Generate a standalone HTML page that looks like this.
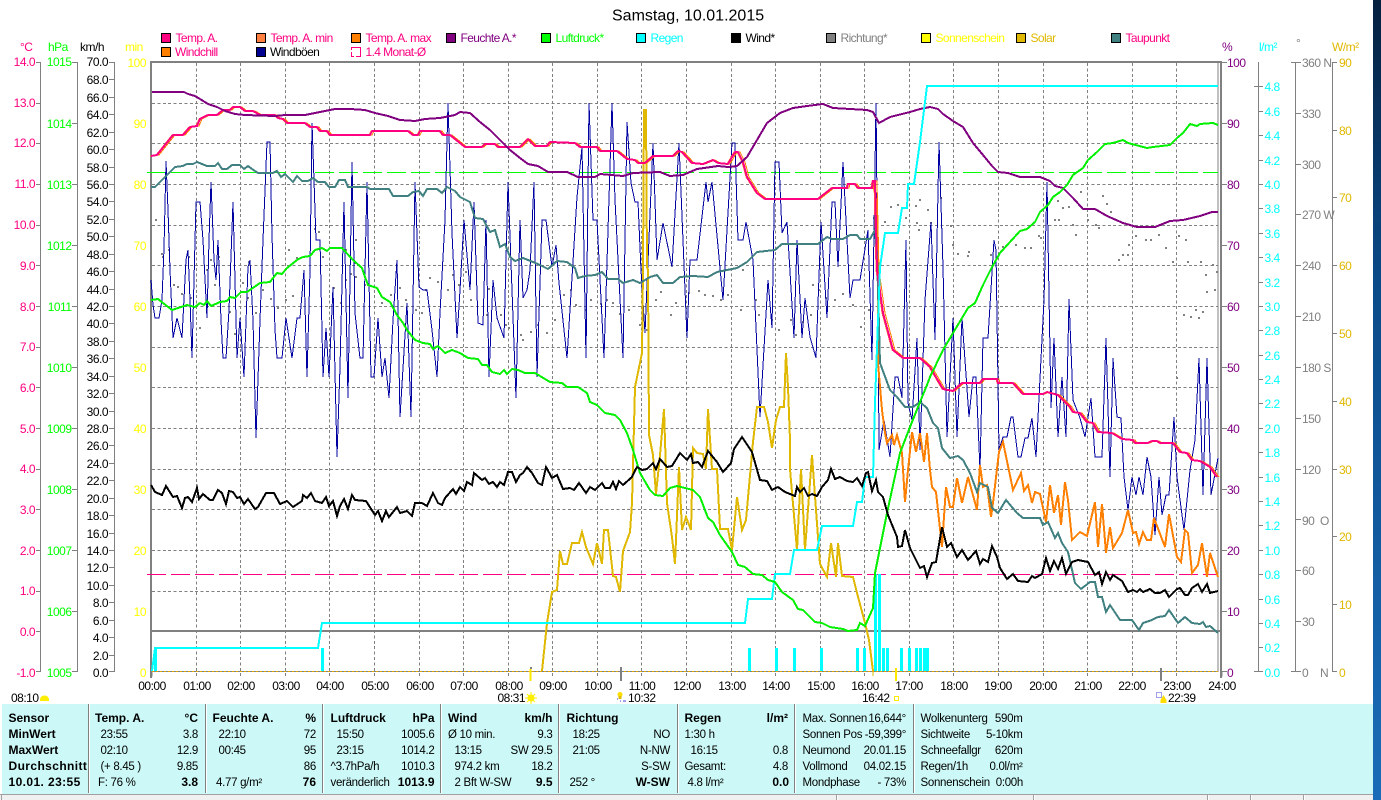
<!DOCTYPE html>
<html><head><meta charset="utf-8"><title>Samstag, 10.01.2015</title>
<style>
html,body{margin:0;padding:0;background:#fff;overflow:hidden}
svg{display:block;font-family:"Liberation Sans",sans-serif}
text{font-size:12px;letter-spacing:-.5px}
.e{text-anchor:end}
.p{fill:#ff0080}.g{fill:#00ff00}.k{fill:#000}.y{fill:#ffff00}.v{fill:#800080}.c{fill:#00ffff}.a{fill:#808080}.o{fill:#e0b800}
.n{letter-spacing:-.6px}
.t text{font-size:11.5px;letter-spacing:-.3px}
.t .b{font-size:12px;font-weight:bold;letter-spacing:0}
.s{fill:none;shape-rendering:crispEdges;stroke-linejoin:miter}
</style></head><body>
<svg width="1381" height="800" viewBox="0 0 1381 800" xmlns="http://www.w3.org/2000/svg">
<defs>
<linearGradient id="bg" x1="0" y1="0" x2="0" y2="1"><stop offset="0" stop-color="#06203f"/><stop offset=".35" stop-color="#0a4a88"/><stop offset="1" stop-color="#1a6cb8"/></linearGradient>
<polyline id="tmp" points="151,156 157,155 173,135 183,135 190,127 197,126 200,119 208,115 217,115 223,110 230,110 233,107 240,107 245,111 253,111 260,115 275,115 278,118 283,119 287,123 305,123 310,127 317,127 320,131 327,131 330,135 370,135 372,131 408,131 413,135 418,135 420,131 440,131 443,135 450,135 460,143 465,147 482,147 485,144 495,144 498,147 520,147 528,139 535,146 547,146 550,142 575,143 580,147 597,147 600,151 617,151 627,159 635,160 638,163 645,163 653,156 673,156 678,151 682,152 692,163 703,164 713,160 718,163 728,164 735,152 738,152 743,162 747,177 757,193 765,199 818,199 832,188 847,188 848,184 855,184 858,188 872,188 873,181 875,181 877,270 883,313 893,350 903,358 920,358 930,367 943,389 953,391 962,383 980,383 983,379 997,379 998,383 1013,383 1023,394 1043,394 1047,392 1058,395 1070,407 1073,412 1080,413 1087,422 1093,423 1098,432 1112,433 1122,439 1133,440 1135,443 1148,443 1152,441 1157,441 1160,443 1173,443 1180,452 1187,453 1192,460 1200,461 1210,467 1217,477"/>
</defs>
<rect width="1381" height="800" fill="#fff"/>
<rect x="1373" y="0" width="8" height="800" fill="url(#bg)"/>

<!-- title -->
<text x="612" y="20.5" style="font-size:16px;letter-spacing:0" class="k">Samstag, 10.01.2015</text>

<!-- legend -->
<g stroke="#000" stroke-width="1" shape-rendering="crispEdges">
<rect x="161.5" y="33.5" width="9" height="9" fill="#ff0080"/><rect x="256.5" y="33.5" width="9" height="9" fill="#ff8040"/><rect x="351.5" y="33.5" width="9" height="9" fill="#ff8000"/><rect x="446.5" y="33.5" width="9" height="9" fill="#800080"/><rect x="541.5" y="33.5" width="9" height="9" fill="#00ff00"/><rect x="636.5" y="33.5" width="9" height="9" fill="#00ffff"/><rect x="731.5" y="33.5" width="9" height="9" fill="#000"/><rect x="826.5" y="33.5" width="9" height="9" fill="#808080"/><rect x="921.5" y="33.5" width="9" height="9" fill="#ffff00"/><rect x="1016.5" y="33.5" width="9" height="9" fill="#e0b800"/><rect x="1111.5" y="33.5" width="9" height="9" fill="#408080"/>
<rect x="161.5" y="47.5" width="9" height="9" fill="#ff8000"/><rect x="256.5" y="47.5" width="9" height="9" fill="#000090"/>
</g>
<path d="M351.5 50V47.5H360.5V56.5H356" fill="none" stroke="#ff0080" shape-rendering="crispEdges"/>
<path d="M351.5 52V56.5H354" fill="none" stroke="#ff0080" shape-rendering="crispEdges"/>
<g>
<text x="175.5" y="42" class="p n">Temp. A.</text><text x="270.5" y="42" class="p n">Temp. A. min</text><text x="365.5" y="42" class="p n">Temp. A. max</text><text x="460.5" y="42" class="v n">Feuchte A.*</text><text x="555.5" y="42" class="g n">Luftdruck*</text><text x="650.5" y="42" class="c n">Regen</text><text x="745.5" y="42" class="k n">Wind*</text><text x="840.5" y="42" class="a n">Richtung*</text><text x="935.5" y="42" class="y n">Sonnenschein</text><text x="1030.5" y="42" class="o n">Solar</text><text x="1125.5" y="42" class="p n">Taupunkt</text>
<text x="175" y="56" class="p n">Windchill</text><text x="270" y="56" class="k n">Windböen</text><text x="365.5" y="56" class="p n">1.4 Monat-Ø</text>
</g>

<!-- axis headers -->
<text x="20" y="51" class="p">°C</text><text x="48" y="51" class="g">hPa</text><text x="80" y="51" class="k">km/h</text><text x="125" y="51" class="y">min</text>
<text x="1222" y="51" class="v">%</text><text x="1259" y="51" class="c">l/m²</text><text x="1296" y="47" class="a">°</text><text x="1332" y="51" class="o">W/m²</text>

<!-- axis lines + ticks -->
<g fill="none" stroke="#808080" shape-rendering="crispEdges">
<path d="M40.5 62V672M36 62.5H41M36 103.5H41M36 143.5H41M36 184.5H41M36 225.5H41M36 265.5H41M36 306.5H41M36 347.5H41M36 387.5H41M36 428.5H41M36 469.5H41M36 509.5H41M36 550.5H41M36 591.5H41M36 631.5H41M36 671.5H41"/>
<path d="M77.5 62V672M72 62.5H78M72 123.5H78M72 184.5H78M72 245.5H78M72 306.5H78M72 367.5H78M72 428.5H78M72 489.5H78M72 550.5H78M72 611.5H78M72 671.5H78"/>
<path d="M114.5 62V672M109 62.5H115M109 79.5H115M109 97.5H115M109 114.5H115M109 132.5H115M109 149.5H115M109 167.5H115M109 184.5H115M109 201.5H115M109 219.5H115M109 236.5H115M109 254.5H115M109 271.5H115M109 289.5H115M109 306.5H115M109 323.5H115M109 341.5H115M109 358.5H115M109 376.5H115M109 393.5H115M109 411.5H115M109 428.5H115M109 445.5H115M109 463.5H115M109 480.5H115M109 498.5H115M109 515.5H115M109 533.5H115M109 550.5H115M109 567.5H115M109 585.5H115M109 602.5H115M109 620.5H115M109 637.5H115M109 655.5H115M109 671.5H115"/>
<path d="M1222 62.5H1227M1222 123.5H1227M1222 184.5H1227M1222 245.5H1227M1222 306.5H1227M1222 367.5H1227M1222 428.5H1227M1222 489.5H1227M1222 550.5H1227M1222 611.5H1227M1222 671.5H1227"/>
<path d="M1258.5 62V672M1254 86.5H1263M1258 111.5H1263M1258 135.5H1263M1258 160.5H1263M1258 184.5H1263M1258 208.5H1263M1258 233.5H1263M1258 257.5H1263M1258 282.5H1263M1258 306.5H1263M1258 330.5H1263M1258 355.5H1263M1258 379.5H1263M1258 403.5H1263M1258 428.5H1263M1258 452.5H1263M1258 477.5H1263M1258 501.5H1263M1258 525.5H1263M1258 550.5H1263M1258 574.5H1263M1258 599.5H1263M1258 623.5H1263M1258 647.5H1263M1254 671.5H1263"/>
<path d="M1295.5 62V672M1291 62.5H1301M1296 113.5H1301M1296 164.5H1301M1296 214.5H1301M1296 265.5H1301M1296 316.5H1301M1296 367.5H1301M1296 418.5H1301M1296 469.5H1301M1296 519.5H1301M1296 570.5H1301M1296 621.5H1301M1291 671.5H1301"/>
<path d="M1332.5 62V672M1332 62.5H1337M1332 130.5H1337M1332 197.5H1337M1332 265.5H1337M1332 333.5H1337M1332 401.5H1337M1332 469.5H1337M1332 536.5H1337M1332 604.5H1337M1332 671.5H1337"/>
</g>

<!-- °C labels -->
<g class="p">
<text class="e" x="35" y="66">14.0</text><text class="e" x="35" y="107">13.0</text><text class="e" x="35" y="147">12.0</text><text class="e" x="35" y="188">11.0</text><text class="e" x="35" y="229">10.0</text><text class="e" x="35" y="270">9.0</text><text class="e" x="35" y="311">8.0</text><text class="e" x="35" y="351">7.0</text><text class="e" x="35" y="392">6.0</text><text class="e" x="35" y="433">5.0</text><text class="e" x="35" y="473">4.0</text><text class="e" x="35" y="514">3.0</text><text class="e" x="35" y="555">2.0</text><text class="e" x="35" y="595">1.0</text><text class="e" x="35" y="636">0.0</text><text class="e" x="35" y="677">-1.0</text>
</g>
<g class="g">
<text class="e" x="71.5" y="66">1015</text><text class="e" x="71.5" y="128">1014</text><text class="e" x="71.5" y="189">1013</text><text class="e" x="71.5" y="250">1012</text><text class="e" x="71.5" y="311">1011</text><text class="e" x="71.5" y="372">1010</text><text class="e" x="71.5" y="433">1009</text><text class="e" x="71.5" y="494">1008</text><text class="e" x="71.5" y="555">1007</text><text class="e" x="71.5" y="616">1006</text><text class="e" x="71.5" y="677">1005</text>
</g>
<g class="k">
<text class="e" x="108" y="66">70.0</text><text class="e" x="108" y="84">68.0</text><text class="e" x="108" y="102">66.0</text><text class="e" x="108" y="119">64.0</text><text class="e" x="108" y="137">62.0</text><text class="e" x="108" y="154">60.0</text><text class="e" x="108" y="172">58.0</text><text class="e" x="108" y="189">56.0</text><text class="e" x="108" y="206">54.0</text><text class="e" x="108" y="224">52.0</text><text class="e" x="108" y="241">50.0</text><text class="e" x="108" y="259">48.0</text><text class="e" x="108" y="276">46.0</text><text class="e" x="108" y="294">44.0</text><text class="e" x="108" y="311">42.0</text><text class="e" x="108" y="328">40.0</text><text class="e" x="108" y="346">38.0</text><text class="e" x="108" y="363">36.0</text><text class="e" x="108" y="381">34.0</text><text class="e" x="108" y="398">32.0</text><text class="e" x="108" y="416">30.0</text><text class="e" x="108" y="433">28.0</text><text class="e" x="108" y="450">26.0</text><text class="e" x="108" y="468">24.0</text><text class="e" x="108" y="485">22.0</text><text class="e" x="108" y="503">20.0</text><text class="e" x="108" y="520">18.0</text><text class="e" x="108" y="538">16.0</text><text class="e" x="108" y="555">14.0</text><text class="e" x="108" y="572">12.0</text><text class="e" x="108" y="590">10.0</text><text class="e" x="108" y="607">8.0</text><text class="e" x="108" y="625">6.0</text><text class="e" x="108" y="642">4.0</text><text class="e" x="108" y="660">2.0</text><text class="e" x="108" y="677">0.0</text>
</g>
<g class="y">
<text class="e" x="146" y="67">100</text><text class="e" x="146" y="128">90</text><text class="e" x="146" y="189">80</text><text class="e" x="146" y="250">70</text><text class="e" x="146" y="311">60</text><text class="e" x="146" y="372">50</text><text class="e" x="146" y="433">40</text><text class="e" x="146" y="494">30</text><text class="e" x="146" y="555">20</text><text class="e" x="146" y="616">10</text><text class="e" x="146" y="677">0</text>
</g>
<g class="v">
<text x="1227" y="67">100</text><text x="1227" y="128">90</text><text x="1227" y="189">80</text><text x="1227" y="250">70</text><text x="1227" y="311">60</text><text x="1227" y="372">50</text><text x="1227" y="433">40</text><text x="1227" y="494">30</text><text x="1227" y="555">20</text><text x="1227" y="616">10</text><text x="1227" y="677">0</text>
</g>
<g class="c">
<text x="1264.5" y="91">4.8</text><text x="1264.5" y="116">4.6</text><text x="1264.5" y="140">4.4</text><text x="1264.5" y="165">4.2</text><text x="1264.5" y="189">4.0</text><text x="1264.5" y="213">3.8</text><text x="1264.5" y="238">3.6</text><text x="1264.5" y="262">3.4</text><text x="1264.5" y="287">3.2</text><text x="1264.5" y="311">3.0</text><text x="1264.5" y="335">2.8</text><text x="1264.5" y="360">2.6</text><text x="1264.5" y="384">2.4</text><text x="1264.5" y="408">2.2</text><text x="1264.5" y="433">2.0</text><text x="1264.5" y="457">1.8</text><text x="1264.5" y="482">1.6</text><text x="1264.5" y="506">1.4</text><text x="1264.5" y="530">1.2</text><text x="1264.5" y="555">1.0</text><text x="1264.5" y="579">0.8</text><text x="1264.5" y="604">0.6</text><text x="1264.5" y="628">0.4</text><text x="1264.5" y="652">0.2</text><text x="1264.5" y="677">0.0</text>
</g>
<g class="a">
<text x="1302" y="67">360 N</text><text x="1302" y="118">330</text><text x="1302" y="169">300</text><text x="1302" y="219">270 W</text><text x="1302" y="270">240</text><text x="1302" y="321">210</text><text x="1302" y="372">180 S</text><text x="1302" y="423">150</text><text x="1302" y="474">120</text><text x="1302" y="525">90</text><text x="1320" y="525">O</text><text x="1302" y="575">60</text><text x="1302" y="626">30</text><text x="1302" y="677">0</text><text x="1320" y="677">N</text>
</g>
<g class="o">
<text x="1339" y="67">90</text><text x="1339" y="135">80</text><text x="1339" y="202">70</text><text x="1339" y="270">60</text><text x="1339" y="338">50</text><text x="1339" y="406">40</text><text x="1339" y="474">30</text><text x="1339" y="541">20</text><text x="1339" y="609">10</text><text x="1339" y="677">0</text>
</g>

<!-- grid -->
<g fill="none" stroke="#808080" stroke-dasharray="3 2.4" shape-rendering="crispEdges">
<path d="M152 103.5H1218M152 143.5H1218M152 184.5H1218M152 225.5H1218M152 265.5H1218M152 306.5H1218M152 347.5H1218M152 387.5H1218M152 428.5H1218M152 469.5H1218M152 509.5H1218M152 550.5H1218M152 591.5H1218"/>
<path d="M196.5 63V676M240.5 63V676M285.5 63V676M329.5 63V676M374.5 63V676M419.5 63V676M463.5 63V676M508.5 63V676M552.5 63V676M597.5 63V676M641.5 63V676M686.5 63V676M731.5 63V676M775.5 63V676M820.5 63V676M864.5 63V676M909.5 63V676M953.5 63V676M998.5 63V676M1043.5 63V676M1087.5 63V676M1132.5 63V676M1176.5 63V676"/>
</g>
<path d="M152 672V676.5M1222 672V676.5" stroke="#808080" fill="none"/>
<!-- frame -->
<g fill="none" stroke="#808080" shape-rendering="crispEdges">
<path d="M150 62H1222" stroke-width="2"/>
<path d="M151 61V678" stroke-width="2"/>
<path d="M1221 61V678" stroke-width="2"/>
<path d="M1218 63V672"/>
<path d="M151 631H1220" stroke-width="2"/>
<path d="M152 671.5H1218"/>
</g>
<path d="M152 671.5H1218" stroke="#e0a800" stroke-dasharray="2 2" fill="none" shape-rendering="crispEdges"/>

<!-- ref dashed -->
<path d="M147 172.5H1218" stroke="#00ff00" stroke-dasharray="19 5" fill="none" shape-rendering="crispEdges"/>
<path d="M147 574.5H1218" stroke="#ff0080" stroke-dasharray="19 5" fill="none" shape-rendering="crispEdges"/>

<!-- direction dots -->
<path fill="none" stroke="#808080" stroke-width="2" shape-rendering="crispEdges" d="M155 220h2M161 254h2M168 250h2M162 257h2M188 257h2M210 260h2M218 257h2M248 262h2M288 250h2M296 258h2M314 229h2M318 232h2M322 257h2M355 240h2M345 250h2M354 263h2M173 285h2M177 287h2M181 294h2M190 298h2M199 328h2M214 285h2M206 270h2M229 312h2M234 334h2M242 283h2M247 298h2M255 313h2M262 290h2M270 299h2M277 308h2M285 300h2M292 296h2M333 288h2M340 303h2M345 280h2M350 274h2M355 277h2M364 285h2M381 303h2M390 295h2M399 288h2M405 300h2M415 310h2M421 313h2M425 290h2M429 278h2M437 282h2M447 290h2M452 275h2M458 285h2M465 272h2M470 300h2M486 315h2M488 289h2M500 315h2M505 325h2M508 328h2M520 335h2M522 340h2M530 332h2M537 325h2M546 333h2M554 320h2M563 295h2M570 290h2M575 305h2M585 310h2M590 300h2M600 304h2M606 300h2M612 303h2M619 314h2M628 310h2M639 325h2M646 330h2M655 300h2M660 292h2M670 315h2M675 303h2M688 293h2M698 291h2M704 295h2M712 296h2M720 300h2M727 295h2M740 310h2M742 270h2M755 300h2M758 315h2M771 320h2M778 330h2M790 320h2M795 335h2M802 322h2M810 315h2M812 285h2M818 290h2M825 298h2M834 300h2M842 294h2M852 305h2M860 327h2M868 310h2M873 218h2M884 222h2M890 207h2M897 205h2M905 218h2M915 206h2M916 223h2M918 230h2M919 200h2M927 210h2M940 198h2M950 226h2M930 223h2M952 245h2M957 254h2M967 256h2M968 252h2M990 255h2M1002 247h2M1015 245h2M1024 248h2M1030 248h2M1038 236h2M1040 238h2M1057 201h2M1054 220h2M1058 220h2M1068 207h2M1072 225h2M1080 192h2M1062 208h2M1075 235h2M1087 220h2M1095 225h2M1098 228h2M1102 196h2M1106 204h2M1110 212h2M1118 260h2M1122 255h2M1127 255h2M1135 236h2M1128 245h2M1145 240h2M1150 240h2M1158 235h2M1160 225h2M1165 248h2M1172 262h2M1178 236h2M1185 240h2M1187 262h2M1200 262h2M1205 275h2M1212 265h2M1216 272h2M1183 315h2M1190 317h2M1195 310h2M1198 318h2M1202 312h2M1206 292h2M1214 290h2M1176 378h2M530 668h2M620 668h2"/>

<!-- Windboeen -->
<polyline class="s" stroke="#0000a0" stroke-width="1" points="151,280 153,305 155,318 159,318 162,300 164,248 166,161 168,210 170,270 173,338 177,318 182,338 186,260 188,250 190,300 192,358 196,202 200,202 203,240 207,318 209,240 211,182 214,260 216,280 218,240 221,320 223,358 226,358 229,310 233,202 237,358 240,318 244,377 248,267 250,260 253,320 256,438 260,320 263,240 267,142 270,142 272,235 275,330 277,358 282,358 286,318 292,358 297,318 300,318 304,270 307,377 310,270 312,123 314,180 316,240 320,240 323,377 326,328 329,377 333,287 337,457 340,367 344,202 348,398 352,162 355,313 360,358 363,358 367,182 371,377 374,377 378,318 382,377 385,358 389,398 393,320 397,260 400,417 407,303 411,417 415,182 419,287 423,290 427,290 432,330 437,377 440,313 445,220 448,103 452,233 457,338 460,290 464,220 470,290 474,202 478,323 483,325 486,220 489,377 493,280 497,318 504,338 508,182 516,398 520,220 523,298 527,290 530,270 534,182 537,377 542,220 546,220 552,267 556,245 559,283 567,358 577,197 582,147 586,358 589,103 593,220 597,220 604,358 612,103 615,200 623,358 627,122 631,183 635,202 638,202 641,270 645,333 653,143 657,260 663,223 672,267 679,143 687,338 690,260 697,260 706,182 708,202 712,182 723,300 732,143 735,143 738,240 743,240 746,222 753,260 760,417 768,280 772,328 775,162 779,162 782,233 787,222 794,338 797,240 802,338 805,298 810,337 816,358 821,222 827,318 832,202 835,202 838,267 843,162 850,298 853,280 860,280 868,230 872,360 876,103 878,300 879,450 884,420 890,457 895,377 898,377 902,398 906,240 908,403 912,420 917,338 920,450 925,300 931,222 935,340 939,142 943,267 947,437 953,318 957,437 962,318 969,417 973,377 976,377 980,470 983,338 988,338 994,240 996,250 999,450 1003,437 1007,437 1011,417 1013,417 1018,457 1021,457 1025,438 1028,438 1032,418 1036,457 1039,398 1044,300 1047,182 1051,408 1054,338 1058,437 1062,377 1066,437 1069,299 1073,400 1080,418 1085,437 1091,398 1095,457 1102,457 1106,338 1110,477 1113,358 1117,417 1121,418 1124,477 1128,510 1132,477 1136,495 1139,477 1143,495 1147,457 1151,477 1155,535 1159,477 1162,515 1166,495 1169,495 1174,417 1177,477 1184,530 1190,470 1195,440 1199,358 1203,495 1207,358 1211,495 1218,458"/>

<!-- rain rate bars -->
<path fill="none" stroke="#00ffff" stroke-width="3" shape-rendering="crispEdges" d="M155.5 648V671M322.5 648V671M749.5 648V671M776.5 648V671M794.5 648V671M821.5 648V671M857.500 648V671M864.500 648V671M883.500 648V671M887.500 648V671M901.500 648V671M909.500 648V671M916.500 648V671M920.500 648V671M924.500 648V671M927.500 648V671"/>
<path fill="none" stroke="#00ffff" stroke-width="3" shape-rendering="crispEdges" d="M875.500 574V671M879.500 574V671"/>

<!-- Solar -->
<polyline class="s" stroke="#e0b800" stroke-width="2" points="542,671 547,623 552,592 557,590 560,551 563,564 567,564 572,543 579,543 582,532 586,547 593,564 597,543 602,564 604,530 608,530 613,576 616,577 620,592 623,551 630,532 632,503 635,387 642,353 643,270 644,110 646,110 647,267 648,270 649,435 653,455 656,494 660,455 664,409 667,503 672,537 675,564 679,467 682,530 686,517 691,530 693,448 697,453 703,454 706,469 708,409 712,469 717,469 720,529 728,529 732,550 737,497 742,530 746,520 753,442 757,407 764,407 768,422 772,448 776,420 780,407 784,407 786,353 788,387 790,440 790,469 797,550 801,469 805,550 812,455 816,510 820,564 827,577 831,543 836,577 838,543 842,576 853,577 857,593 865,623 869,640 873,671"/>

<!-- Temp A min/max thin -->
<use href="#tmp" class="s" stroke="#ff8040" stroke-width="1" transform="translate(-1,0)"/>
<use href="#tmp" class="s" stroke="#ff8000" stroke-width="1" transform="translate(2,0)"/>

<!-- Windchill -->
<polyline class="s" stroke="#ff8000" stroke-width="2" points="873,182 876,200 878,250 878,363 882,410 885,433 887,443 892,435 894,445 897,435 902,453 905,502 908,470 912,432 916,452 920,433 924,462 927,433 930,470 932,487 936,492 942,547 946,487 950,507 953,507 957,478 962,503 968,477 977,510 980,465 983,487 987,485 991,517 993,503 999,452 1003,442 1013,490 1021,473 1024,491 1028,485 1032,503 1035,492 1040,494 1046,522 1050,485 1054,513 1058,495 1061,525 1065,482 1068,500 1072,540 1080,532 1087,536 1095,502 1098,547 1102,504 1106,553 1110,527 1113,548 1122,533 1128,510 1133,533 1136,532 1139,544 1143,532 1147,540 1151,540 1154,518 1165,547 1169,514 1177,557 1181,562 1185,530 1188,533 1192,573 1198,565 1202,543 1207,577 1210,553 1218,577"/>

<!-- Taupunkt -->
<polyline class="s" stroke="#408080" stroke-width="2" points="151,187 155,187 167,175 175,167 183,166 187,164 193,164 197,162 207,166 215,166 218,163 222,169 227,169 232,165 240,165 244,169 248,166 252,169 258,173 273,173 277,171 281,177 285,174 293,182 297,176 302,181 308,181 313,178 318,182 325,182 329,187 335,187 339,180 345,180 348,187 367,187 370,189 389,189 393,196 408,196 413,192 419,191 423,196 427,189 437,189 442,193 447,187 455,191 460,197 470,202 475,218 483,219 490,232 495,230 500,247 505,244 510,257 515,261 523,258 533,262 540,265 548,269 557,261 567,262 575,268 578,278 585,276 595,275 602,272 608,279 618,279 623,283 633,280 640,283 650,277 657,275 663,283 673,283 680,277 693,276 708,277 717,272 727,270 737,268 747,262 757,252 775,250 782,244 818,244 827,237 832,239 843,239 850,235 857,235 860,239 870,239 875,230 877,253 880,363 890,390 897,397 905,407 913,407 920,402 927,408 933,423 938,428 942,448 950,458 958,456 963,460 970,473 977,492 980,483 988,487 992,508 998,513 1006,500 1017,513 1023,518 1040,518 1043,525 1048,522 1055,538 1058,533 1062,543 1068,552 1075,583 1081,589 1090,582 1095,582 1098,597 1102,597 1106,612 1110,605 1120,620 1132,620 1139,630 1143,623 1152,620 1158,617 1165,616 1169,610 1178,623 1185,617 1192,623 1200,624 1203,622 1206,627 1210,626 1218,633"/>

<!-- Temp -->
<use href="#tmp" class="s" stroke="#ff0080" stroke-width="2"/>

<!-- Feuchte -->
<polyline class="s" stroke="#800080" stroke-width="2" points="152,92 184,92 188,94 195,96 200,99 208,104 217,107 225,111 235,114 245,115 275,116 285,115 305,115 310,114 320,112 335,109 350,109 365,110 375,113 388,116 400,120 415,121 425,119 440,118 455,115 460,112 470,113 480,122 490,130 500,140 510,150 520,158 528,164 538,166 548,172 567,172 578,177 595,177 600,174 623,176 633,173 660,172 670,176 683,175 697,169 718,166 728,167 737,166 747,157 757,140 767,123 780,113 793,108 807,106 823,104 833,108 867,110 873,112 879,123 890,117 910,112 920,109 930,107 938,109 943,114 953,121 963,127 973,143 983,155 992,166 998,172 1008,173 1020,177 1040,177 1050,181 1055,186 1063,188 1073,198 1083,209 1095,209 1107,216 1123,223 1137,227 1155,227 1170,221 1183,220 1200,216 1212,212 1218,212"/>

<!-- Regen -->
<polyline class="s" stroke="#00ffff" stroke-width="2" points="152,671 155,648 318,648 322,623 745,623 748,599 772,599 775,574 790,574 794,550 817,550 822,526 853,526 857,502 862,502 865,477 873,477 875,403 878,320 880,267 885,233 898,233 902,208 907,208 908,184 914,184 920,142 927,86 1218,86"/>

<!-- Luftdruck -->
<polyline class="s" stroke="#00f000" stroke-width="2" points="151,300 158,299 163,303 172,310 187,305 195,307 200,303 204,305 207,301 211,306 220,302 227,301 230,297 235,298 241,292 247,292 260,283 270,282 277,273 282,274 287,268 297,260 303,257 310,256 315,250 322,248 327,251 330,248 342,248 353,260 362,268 365,277 368,285 377,288 382,297 390,302 397,315 403,323 407,330 415,340 423,343 430,344 433,349 438,346 445,353 452,350 460,353 468,358 478,359 482,365 487,365 492,372 500,374 504,370 507,374 512,369 518,370 525,373 535,373 550,382 562,383 567,387 578,387 587,393 590,402 597,405 605,413 615,415 620,420 627,433 633,450 640,473 650,490 655,495 663,496 670,488 677,486 693,490 700,497 708,518 713,522 720,535 727,545 732,552 738,565 745,567 753,574 762,575 768,580 775,582 782,592 793,600 798,609 803,610 815,622 822,623 830,627 843,629 848,631 857,630 860,623 865,626 873,608 875,573 887,513 900,453 910,427 920,402 927,385 930,377 943,350 953,333 968,308 975,303 983,285 992,267 1000,253 1010,242 1020,231 1027,229 1035,222 1040,212 1048,205 1053,197 1060,192 1067,185 1073,175 1083,168 1088,160 1097,152 1105,144 1113,143 1123,140 1128,143 1147,148 1153,147 1170,145 1177,138 1183,133 1190,124 1197,126 1200,124 1213,123 1218,125"/>

<!-- Wind -->
<polyline class="s" stroke="#000" stroke-width="2" points="151,485 155,492 162,495 166,486 173,497 177,496 182,508 185,498 188,497 192,502 197,488 199,499 203,494 210,500 213,500 218,490 222,493 226,504 229,491 233,492 237,498 240,497 244,504 248,499 255,509 258,507 266,493 274,493 280,504 287,501 293,507 302,501 303,495 307,498 311,493 315,501 322,503 326,497 329,506 333,501 337,516 340,506 344,499 348,509 352,495 355,500 366,501 375,515 378,511 382,521 386,511 389,517 397,507 400,513 407,511 412,516 415,503 422,503 427,506 433,493 438,503 442,505 445,498 453,489 456,494 460,487 464,491 467,482 472,485 474,473 482,480 485,478 489,484 493,482 497,487 500,482 504,485 508,472 512,472 516,482 520,475 523,473 527,467 532,473 538,483 542,485 546,467 552,478 557,475 563,489 570,488 574,490 579,483 586,493 590,487 595,490 602,483 605,488 610,488 613,482 616,489 619,481 623,485 632,477 637,467 642,470 647,469 653,463 656,469 660,459 667,467 672,466 680,453 687,460 691,454 693,463 698,462 702,467 708,451 717,462 723,472 731,463 734,449 742,437 752,452 760,480 767,481 772,490 778,487 785,492 790,494 795,496 797,487 800,492 804,488 808,496 812,494 817,496 822,487 828,480 831,469 835,479 840,477 847,481 853,482 857,478 862,486 866,473 868,472 872,491 876,480 878,492 883,497 888,515 897,537 898,547 902,546 905,530 910,548 915,558 920,568 924,566 927,577 932,563 936,562 942,527 947,547 951,543 957,557 962,550 968,560 976,551 980,564 983,559 988,562 992,546 997,557 1000,568 1007,579 1013,574 1018,581 1028,582 1032,576 1035,578 1042,574 1046,558 1050,571 1054,561 1058,569 1062,558 1066,574 1072,562 1078,560 1088,562 1095,575 1099,572 1102,584 1106,572 1110,580 1113,575 1122,581 1128,592 1133,590 1137,592 1140,589 1143,592 1150,589 1155,593 1160,593 1165,590 1169,597 1177,589 1180,588 1185,595 1188,595 1192,588 1198,584 1202,592 1207,584 1210,593 1218,591"/>

<!-- event ticks -->
<g fill="none" shape-rendering="crispEdges">
<path d="M530.5 669V681" stroke="#ffe800" stroke-width="2"/>
<path d="M621 668V681" stroke="#808080" stroke-width="2"/>
<path d="M896 668V681" stroke="#ffe800" stroke-width="2"/>
<path d="M1161 668V681" stroke="#808080" stroke-width="2"/>
<path d="M873 672V676" stroke="#e0b800"/>
</g>

<!-- time labels -->
<g class="k" text-anchor="middle">
<text x="152" y="690">00:00</text><text x="197" y="690">01:00</text><text x="241" y="690">02:00</text><text x="286" y="690">03:00</text><text x="330" y="690">04:00</text><text x="375" y="690">05:00</text><text x="420" y="690">06:00</text><text x="464" y="690">07:00</text><text x="509" y="690">08:00</text><text x="553" y="690">09:00</text><text x="598" y="690">10:00</text><text x="642" y="690">11:00</text><text x="687" y="690">12:00</text><text x="732" y="690">13:00</text><text x="776" y="690">14:00</text><text x="821" y="690">15:00</text><text x="865" y="690">16:00</text><text x="909" y="690">17:00</text><text x="954" y="690">18:00</text><text x="998" y="690">19:00</text><text x="1043" y="690">20:00</text><text x="1088" y="690">21:00</text><text x="1132" y="690">22:00</text><text x="1177" y="690">23:00</text><text x="1222" y="690">24:00</text>
</g>
<text x="11" y="702" class="k">08:10</text>
<text x="497.5" y="702" class="k">08:31</text>
<text x="628" y="702" class="k">10:32</text>
<text x="862" y="702" class="k">16:42</text>
<text x="1168" y="702" class="k">22:39</text>
<!-- event icons -->
<path d="M40 701V699Q41 695.5 44.500 695.500T49 699V701Z" fill="#ffee00"/>
<circle cx="531" cy="698" r="3.500" fill="#ffee00"/>
<path d="M531 692V704M525 698H537M527 694L535 702M535 694L527 702" stroke="#ffee00" fill="none"/>
<circle cx="620" cy="694.500" r="2.500" fill="#ffdd00"/><path d="M618.500 696H621.500V699H618.500Z" fill="#ddbb00"/>
<path d="M617 699h1M620 701h1M623 701h3" stroke="#4040d0" fill="none" shape-rendering="crispEdges"/>
<rect x="894.500" y="696.500" width="4" height="4" fill="none" stroke="#ffee00" shape-rendering="crispEdges"/>
<rect x="1156.500" y="692.500" width="5" height="5" fill="none" stroke="#4040d0" stroke-dasharray="1 1" shape-rendering="crispEdges"/>
<path d="M1163.500 695L1166.500 700V703H1160.500V700Z" fill="#ffdd00"/>

<!-- panel -->
<rect x="2" y="704" width="1371" height="90" fill="#ccf9f7"/>
<g shape-rendering="crispEdges">
<path d="M88 704V793M205 704V793M322 704V793M440 704V793M558 704V793M677 704V793M794 704V793M913 704V793" stroke="#808080" stroke-width="1" transform="translate(.5,0)"/>
<path d="M89 704V793M206 704V793M323 704V793M441 704V793M559 704V793M678 704V793M795 704V793M914 704V793" stroke="#fff" stroke-width="1" transform="translate(.5,0)"/>
</g>
<g class="t k">
<text class="b" x="8.500" y="722">Sensor</text><text class="b" x="8.500" y="738">MinWert</text><text class="b" x="8.500" y="754">MaxWert</text><text class="b" x="8.500" y="770" style="letter-spacing:.4px">Durchschnitt</text><text class="b" x="8.500" y="786" style="letter-spacing:.4px">10.01. 23:55</text>

<text class="b" x="95" y="722">Temp. A.</text><text class="b e" x="198" y="722">°C</text>
<text x="100.500" y="738">23:55</text><text class="e" x="198" y="738">3.8</text>
<text x="100.500" y="754">02:10</text><text class="e" x="198" y="754">12.9</text>
<text x="100.500" y="770">(+ 8.45 )</text><text class="e" x="198" y="770">9.85</text>
<text x="98" y="786">F: 76 %</text><text class="b e" x="198" y="786">3.8</text>

<text class="b" x="212.500" y="722">Feuchte A.</text><text class="b e" x="316" y="722">%</text>
<text x="218.500" y="738">22:10</text><text class="e" x="316" y="738">72</text>
<text x="218.500" y="754">00:45</text><text class="e" x="316" y="754">95</text>
<text class="e" x="316" y="770">86</text>
<text x="216" y="786">4.77 g/m²</text><text class="b e" x="316" y="786">76</text>

<text class="b" x="330.500" y="722">Luftdruck</text><text class="b e" x="434.500" y="722">hPa</text>
<text x="336.500" y="738">15:50</text><text class="e" x="434.500" y="738">1005.6</text>
<text x="336.500" y="754">23:15</text><text class="e" x="434.500" y="754">1014.2</text>
<text x="330.500" y="770">^3.7hPa/h</text><text class="e" x="434.500" y="770">1010.3</text>
<text x="330.500" y="786">veränderlich</text><text class="b e" x="434.500" y="786">1013.9</text>

<text class="b" x="448" y="722">Wind</text><text class="b e" x="552.500" y="722">km/h</text>
<text x="448" y="738">Ø 10 min.</text><text class="e" x="552.500" y="738">9.3</text>
<text x="454.500" y="754">13:15</text><text class="e" x="552.500" y="754">SW 29.5</text>
<text x="454.500" y="770">974.2 km</text><text class="e" x="552.500" y="770">18.2</text>
<text x="454.500" y="786">2 Bft W-SW</text><text class="b e" x="552.500" y="786">9.5</text>

<text class="b" x="566.500" y="722">Richtung</text>
<text x="572.500" y="738">18:25</text><text class="e" x="670" y="738">NO</text>
<text x="572.500" y="754">21:05</text><text class="e" x="670" y="754">N-NW</text>
<text class="e" x="670" y="770">S-SW</text>
<text x="569.500" y="786">252 °</text><text class="b e" x="670" y="786">W-SW</text>

<text class="b" x="684.500" y="722">Regen</text><text class="b e" x="788" y="722">l/m²</text>
<text x="684.500" y="738">1:30 h</text>
<text x="690.500" y="754">16:15</text><text class="e" x="788" y="754">0.8</text>
<text x="684.500" y="770">Gesamt:</text><text class="e" x="788" y="770">4.8</text>
<text x="687.500" y="786">4.8 l/m²</text><text class="b e" x="789" y="786">0.0</text>

<text x="802.500" y="722">Max. Sonnen</text><text class="e" x="906" y="722">16,644°</text>
<text x="802.500" y="738">Sonnen Pos</text><text class="e" x="906" y="738">-59,399°</text>
<text x="802.500" y="754">Neumond</text><text class="e" x="906" y="754">20.01.15</text>
<text x="802.500" y="770">Vollmond</text><text class="e" x="906" y="770">04.02.15</text>
<text x="802.500" y="786">Mondphase</text><text class="e" x="906" y="786">- 73%</text>

<text x="920.500" y="722">Wolkenunterg</text><text class="e" x="1022.500" y="722">590m</text>
<text x="920.500" y="738">Sichtweite</text><text class="e" x="1022.500" y="738">5-10km</text>
<text x="920.500" y="754">Schneefallgr</text><text class="e" x="1022.500" y="754">620m</text>
<text x="920.500" y="770">Regen/1h</text><text class="e" x="1022.500" y="770">0.0l/m²</text>
<text x="920.500" y="786">Sonnenschein</text><text class="e" x="1023" y="786">0:00h</text>
</g>

<!-- status bar -->
<rect x="0" y="794" width="1373" height="6" fill="#f0f0f0"/>
<path d="M0 794.500H1373" stroke="#a0a0a0" fill="none" shape-rendering="crispEdges"/>
<path d="M1.500 795V800M836.500 795V800M1033.500 795V800M1207.500 795V800M1250.500 795V800M1303.500 795V800" stroke="#a0a0a0" stroke-width="1" fill="none" shape-rendering="crispEdges"/>
<path d="M837.500 795V800M1034.500 795V800M1208.500 795V800M1251.500 795V800M1304.500 795V800" stroke="#fff" fill="none" shape-rendering="crispEdges"/>
</svg>
</body></html>
